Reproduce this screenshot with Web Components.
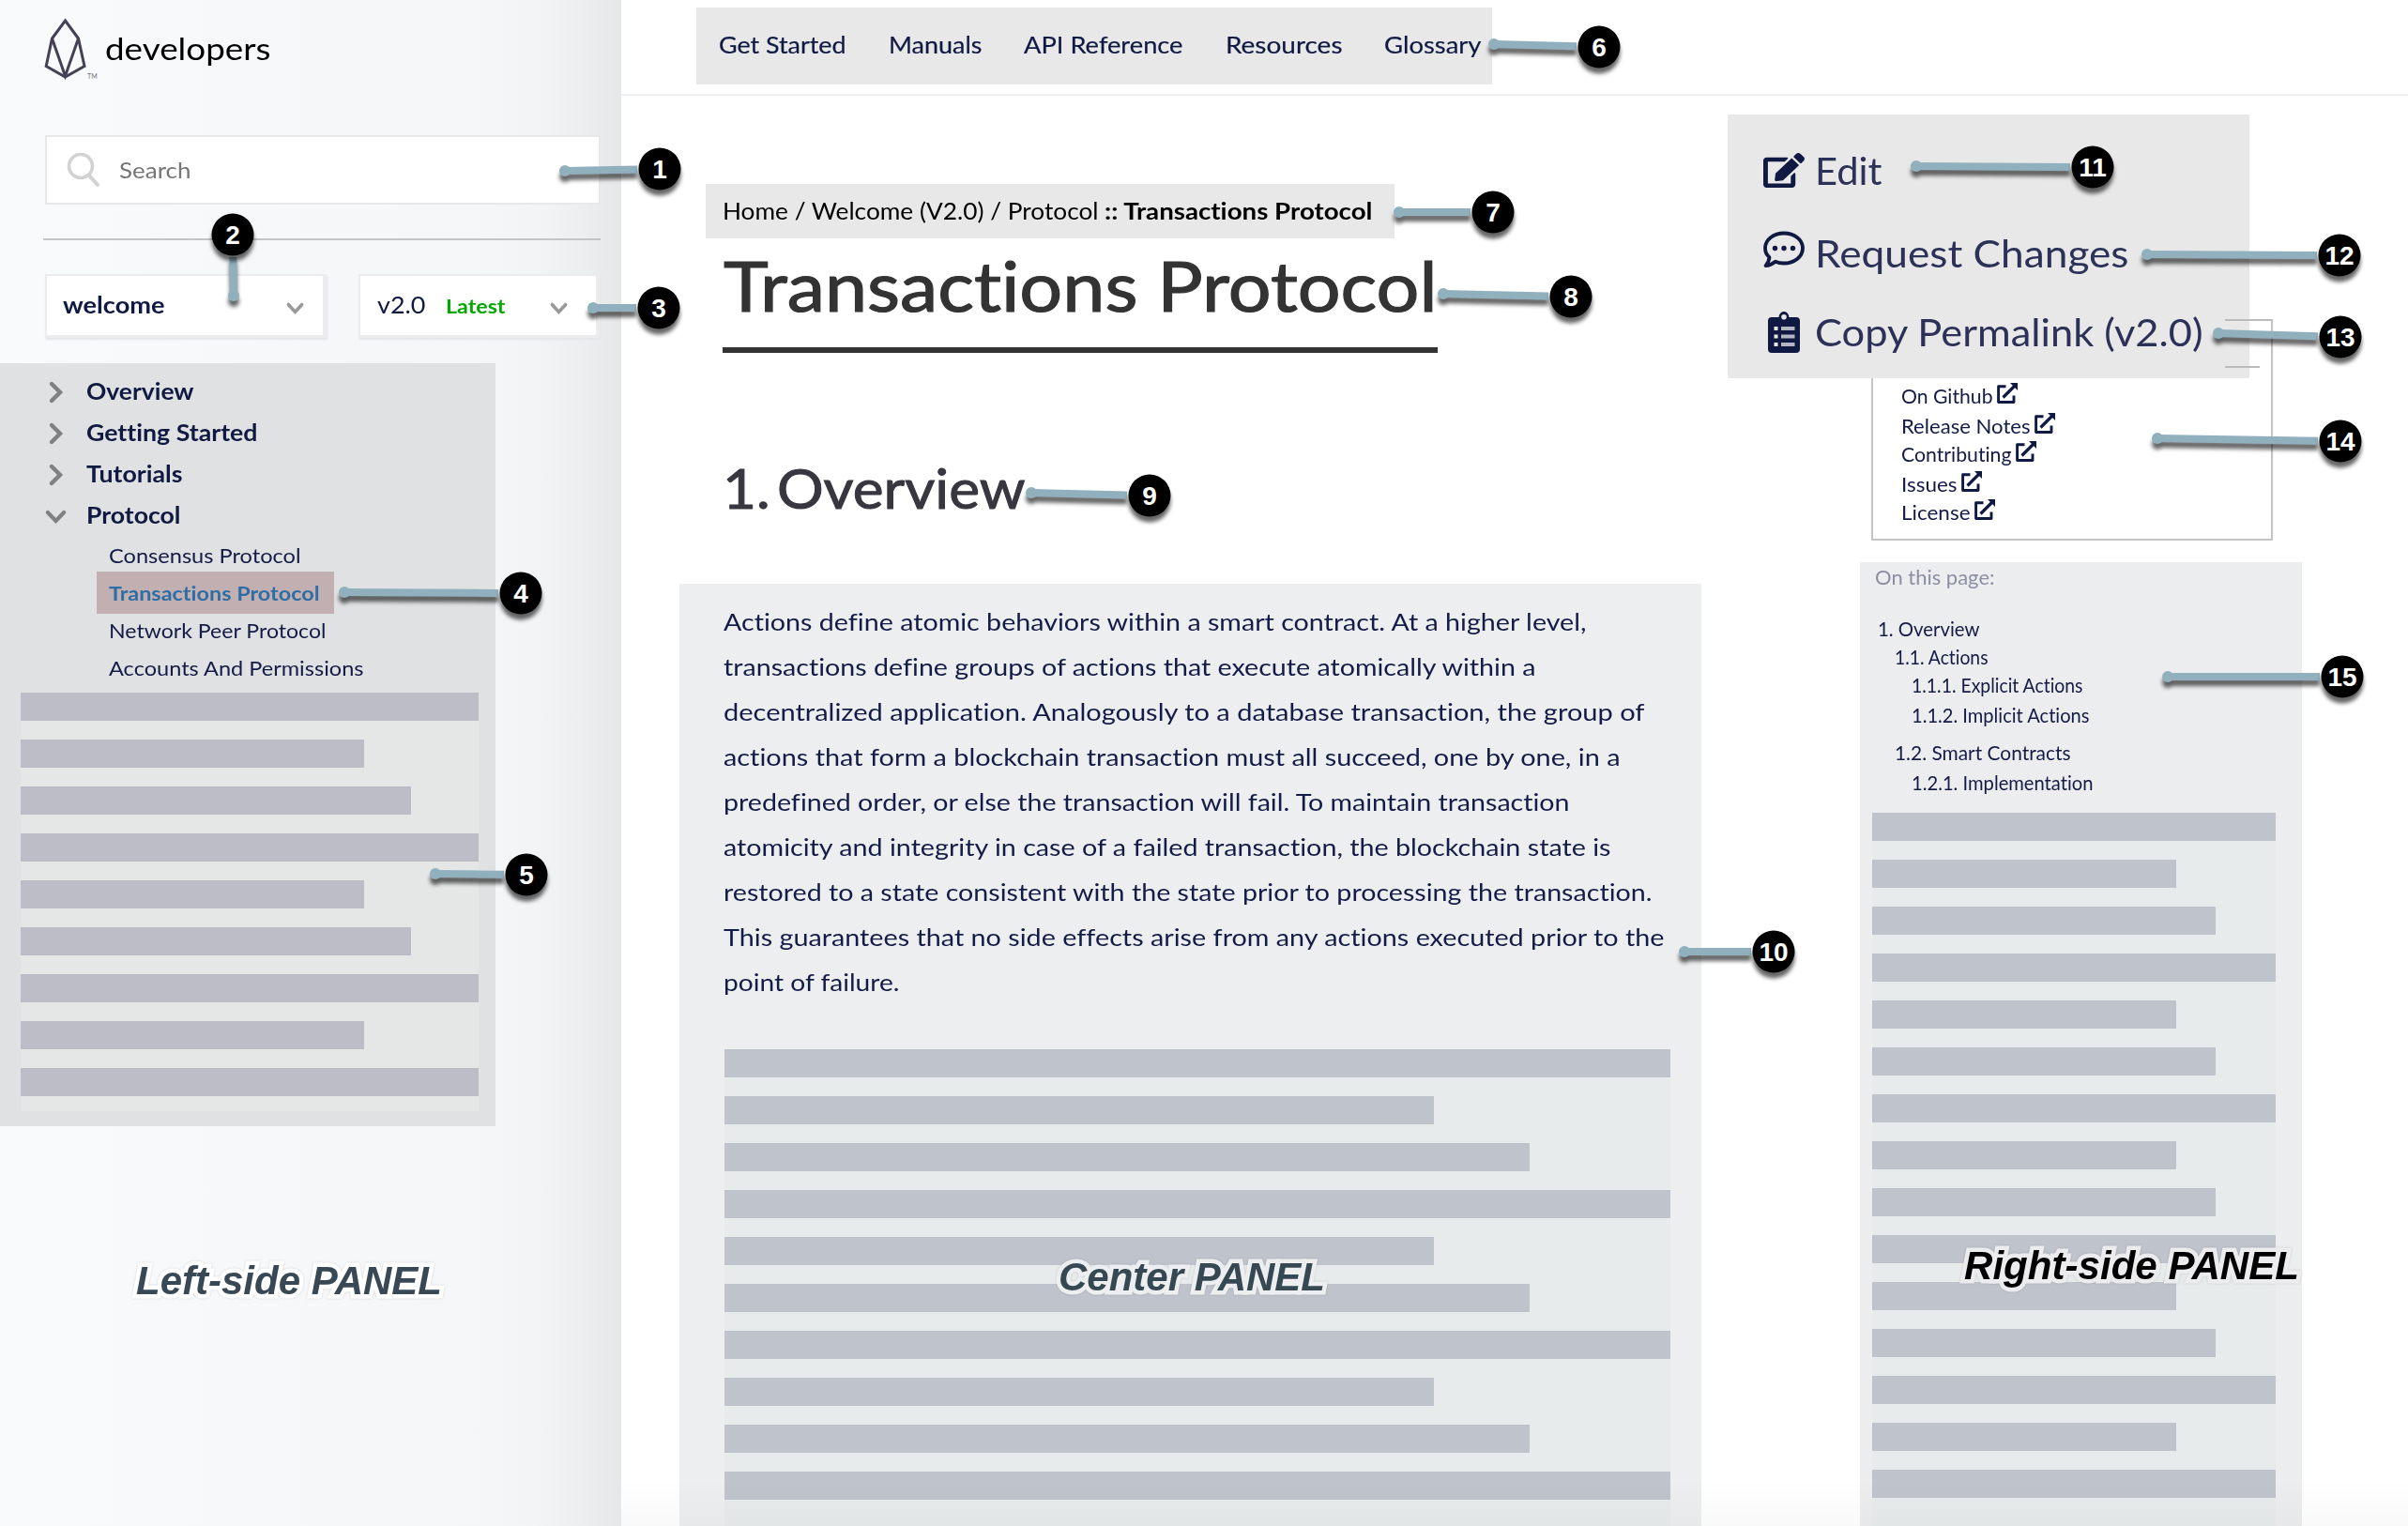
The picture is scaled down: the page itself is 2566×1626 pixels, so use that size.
<!DOCTYPE html>
<html lang="en">
<head>
<meta charset="utf-8">
<title>Transactions Protocol</title>
<style>
html,body{margin:0;padding:0;width:2566px;height:1626px;overflow:hidden;background:#fff;font-family:Lato,"Open Sans",sans-serif;font-variant-ligatures:none;color:#141b46}
</style>
</head>
<body>
<docs-page></docs-page>
<script>
const define = (name, html, setup) => {
  const tpl = document.createElement('template');
  tpl.innerHTML = html;
  customElements.define(name, class extends HTMLElement {
    constructor() { super(); this.attachShadow({ mode: 'open' }).append(tpl.content.cloneNode(true)); }
    connectedCallback() { if (setup && !this.ready) { this.ready = true; setup(this, this.shadowRoot); } }
  });
};

/* One line of text, widened so that it fills the width "w" */
define('fit-text', `<style>:host{display:block;white-space:nowrap;flex:none}span{display:inline-block;white-space:pre;transform-origin:0 50%}</style><span><slot></slot></span>`, (el, root) => {
  const w = +el.getAttribute('w');
  const s = +el.getAttribute('s');
  const h = +el.getAttribute('h');
  if (s) el.style.fontSize = s + 'px';
  if (h) { el.style.height = h + 'px'; el.style.lineHeight = h + 'px'; }
  const span = root.querySelector('span');
  if (w) {
    el.style.width = w + 'px';
    const natural = span.getBoundingClientRect().width;
    span.style.transform = `scaleX(${((w + 1.5) / natural).toFixed(4)})`;
  }
});

const ICONS = {
  edit: ['0 0 576 512', '<path fill="currentColor" d="M402.6 83.2l90.2 90.2c3.8 3.8 3.8 10 0 13.8L274.4 405.6l-92.8 10.3c-12.4 1.4-22.9-9.1-21.5-21.5l10.3-92.8L388.8 83.2c3.8-3.8 10-3.8 13.8 0zm162-22.9l-48.8-48.8c-15.2-15.2-39.9-15.2-55.2 0l-35.4 35.4c-3.8 3.8-3.8 10 0 13.8l90.2 90.2c3.8 3.8 10 3.8 13.8 0l35.4-35.4c15.2-15.3 15.2-40 0-55.2zM384 346.2V448H64V128h229.8c3.2 0 6.2-1.3 8.5-3.5l40-40c7.6-7.6 2.2-20.5-8.5-20.5H48C21.5 64 0 85.5 0 112v352c0 26.5 21.5 48 48 48h352c26.5 0 48-21.5 48-48V306.2c0-10.7-12.9-16-20.5-8.5l-40 40c-2.2 2.3-3.5 5.3-3.5 8.5z"/>'],
  comment: ['0 0 44 40', '<path fill="none" stroke="currentColor" stroke-width="3.800" stroke-linejoin="round" d="M22 2.500C32.800 2.500 42 9.300 42 18.500S32.800 34.500 22 34.500C18.500 34.500 15.500 33.900 12.800 32.700C9.800 35.200 6.300 37 2.500 37.200C4.800 34.600 6.200 31.500 6.500 28.200C3.600 25.600 2 22.200 2 18.500C2 9.300 11.200 2.500 22 2.500Z"/><g fill="currentColor"><circle cx="12.500" cy="18.500" r="2.700"/><circle cx="22" cy="18.500" r="2.700"/><circle cx="31.500" cy="18.500" r="2.700"/></g>'],
  clipboard: ['0 0 34 44', '<path fill="currentColor" fill-rule="evenodd" d="M4 6H11.500C12 2.500 14 0 17 0S22 2.500 22.500 6H30Q34 6 34 10V40Q34 44 30 44H4Q0 44 0 40V10Q0 6 4 6ZM17 3A2.800 2.800 0 1 0 17 8.600A2.800 2.800 0 1 0 17 3Z"/><path fill="#e8e8e8" d="M6.500 16H10.500V20H6.500ZM6.500 24.500H10.500V28.500H6.500ZM6.500 33H10.500V37H6.500Z"/><path fill="#b4b6c4" d="M14 16H28.500V20H14ZM14 24.500H28.500V28.500H14ZM14 33H28.500V37H14Z"/>'],
  external: ['0 0 22 22', '<path fill="none" stroke="currentColor" stroke-width="2.900" stroke-linejoin="round" d="M9.500 3.800H1.600V20.500H18V13.500"/><path fill="none" stroke="currentColor" stroke-width="3.200" d="M6.500 15.500L19 3"/><path fill="currentColor" d="M14 0H22V8Z"/>'],
  right: ['0 0 15 24', '<path fill="none" stroke="currentColor" stroke-width="4.400" stroke-linecap="round" stroke-linejoin="miter" d="M3 3L12 12L3 21"/>'],
  down: ['0 0 24 15', '<path fill="none" stroke="currentColor" stroke-width="4.400" stroke-linecap="round" stroke-linejoin="miter" d="M3 3L12 12L21 3"/>'],
  search: ['0 0 36 38', '<circle cx="15" cy="15" r="12.500" fill="none" stroke="currentColor" stroke-width="3.600"/><path fill="none" stroke="currentColor" stroke-width="4" stroke-linecap="round" d="M24 25L33 35"/>'],
  logo: ['0 0 56 66', '<g fill="none" stroke="#454055" stroke-width="3" stroke-linejoin="miter"><path d="M21.500 3L35.500 22L42 51.500L21.500 63L1.200 51.500L7.500 22Z"/><path d="M7.500 22L21.500 62L35.500 22"/></g>']
};
define('ui-icon', `<style>:host{display:block;flex:none}svg{display:block;width:100%;height:100%;overflow:visible}</style><svg preserveAspectRatio="none"></svg>`, (el, root) => {
  const [box, body] = ICONS[el.getAttribute('name')];
  const svg = root.querySelector('svg');
  svg.setAttribute('viewBox', box);
  svg.innerHTML = body;
  const [w, h] = el.getAttribute('size').split(' ');
  el.style.width = w + 'px';
  el.style.height = h + 'px';
});

define('dev-logo', `<style>:host{display:flex;height:66px;padding:19px 0 0 48px}
sup{font-size:7px;line-height:8px;color:#77737f;width:10px;margin:58px 0 0 -11px;display:block}
fit-text{color:#000;margin:6px 0 0 9px}</style>
<ui-icon name="logo" size="56 66"></ui-icon><sup>TM</sup><fit-text w="175" s="33.500" h="53">developers</fit-text>`);

define('search-box', `<style>:host{display:flex;align-items:center;box-sizing:border-box;width:592px;height:74px;margin:59px 0 0 48px;border:2px solid #e8e8e8;background:#fff;padding-left:21px;color:#d2d2d2}
fit-text{color:#757575;margin-left:20px}</style>
<ui-icon name="search" size="36 38"></ui-icon><fit-text w="75" s="23.500" h="66">Search</fit-text>`);

define('select-box', `<style>:host{display:flex;box-sizing:border-box;height:68px;border:2px solid #ececee;border-right-width:4px;border-bottom-width:3px;background:#fff;box-shadow:1px 2px 2px #e4e5e8;padding-left:17px;padding-right:20px;color:#0f1941}
.sp{flex:1}ui-icon{color:#999;margin-top:28px}</style>
<slot></slot><div class="sp"></div><ui-icon name="down" size="19 13"></ui-icon>`);

define('nav-item', `<style>:host{display:flex;height:44px;color:#0f1941;font-weight:700}
.i{width:92px;display:flex;justify-content:center;color:#808080;flex:none;box-sizing:border-box;padding-left:27px}
.i ui-icon{margin-top:12px}</style><div class="i"></div><slot></slot>`, (el, root) => {
  const open = el.hasAttribute('open');
  const icon = document.createElement('ui-icon');
  icon.setAttribute('name', open ? 'down' : 'right');
  icon.setAttribute('size', open ? '23 15' : '15 24');
  if (open) icon.style.marginTop = '17px';
  root.querySelector('.i').append(icon);
});

define('skeleton-bars', `<style>:host{display:flex;flex-direction:column;gap:20px;background:var(--gap,#e8ebec)}div{height:30px;background:var(--bar,#bfc3cc);flex:none}</style>`, (el, root) => {
  const widths = el.getAttribute('widths').split(' ');
  const n = +el.getAttribute('count');
  for (let i = 0; i < n; i++) {
    const bar = document.createElement('div');
    bar.style.width = (i === n - 1 ? widths[0] : widths[i % 3]) + 'px';
    root.append(bar);
  }
});

define('side-panel', `<style>:host{display:flex;flex-direction:column;align-items:flex-start;width:662px;height:1626px;flex:none;background:linear-gradient(90deg,#f8fafb 0,#f5f6f8 520px,#f3f4f6 570px,#edeef0 620px,#e6e7e8 662px)}
hr{border:0;margin:36px 0 0 46px;width:594px;height:2px;background:#c4c4c4}
.sel{display:flex;gap:34px;margin:36px 0 0 48px}
.tree{box-sizing:border-box;width:528px;height:813px;margin-top:27px;padding-top:7px;background:#e0e1e2}
.subs{padding:2px 0 0 116px}
.on{box-sizing:border-box;width:253px;height:45px;margin:-3px 0 -2px -13px;padding-left:13px;background:#c1afb1;color:#2f6ea5;font-weight:700}
skeleton-bars{--gap:#e5e7e6;--bar:#bdbdc8;margin:6px 0 0 22px;width:488px;padding-bottom:16px}
</style>
<dev-logo></dev-logo><search-box></search-box><hr>
<div class="sel"><select-box style="width:300px"><fit-text w="107" s="25" h="60" style="font-weight:700">welcome</fit-text></select-box>
<select-box style="width:257px;padding-left:18px;padding-right:30px"><fit-text w="50" s="25.500" h="61">v2.0</fit-text><fit-text w="62" s="21.500" h="64" style="font-weight:700;color:#00a800;margin-left:23px">Latest</fit-text></select-box></div>
<div class="tree">
<nav-item><fit-text w="113" s="25" h="44">Overview</fit-text></nav-item>
<nav-item><fit-text w="181" s="25" h="44">Getting Started</fit-text></nav-item>
<nav-item><fit-text w="101" s="25" h="44">Tutorials</fit-text></nav-item>
<nav-item open><fit-text w="99" s="25" h="44">Protocol</fit-text></nav-item>
<div class="subs"><fit-text w="203" s="21.500" h="40">Consensus Protocol</fit-text>
<div class="on"><fit-text w="223" s="21.500" h="46">Transactions Protocol</fit-text></div>
<fit-text w="230" s="21.500" h="40">Network Peer Protocol</fit-text>
<fit-text w="270" s="21.500" h="40">Accounts And Permissions</fit-text></div>
<skeleton-bars widths="488 366 416" count="9"></skeleton-bars>
</div>`);

define('top-nav', `<style>:host{display:block;height:100px;border-bottom:2px solid #eee}
nav{display:flex;gap:46.500px;box-sizing:border-box;width:848px;height:82px;margin-left:80px;padding-left:24px;background:#e8e8e8;color:#0f1941;-webkit-text-stroke:.2px #0f1941}
.w{padding-top:8px}</style><div class="w"><nav>
<fit-text w="134" s="25" h="78">Get Started</fit-text><fit-text w="98" s="25" h="78">Manuals</fit-text><fit-text w="168" s="25" h="78">API Reference</fit-text><fit-text w="123" s="25" h="78">Resources</fit-text><fit-text w="102" s="25" h="78">Glossary</fit-text></nav></div>`);

define('doc-article', `<style>:host{display:block;width:1089px;margin-left:62px;flex:none}
.crumb{display:flex;box-sizing:border-box;width:734px;height:58px;margin:94px 0 0 28px;padding-left:18px;background:#e8e8e8;color:#000}
.crumb b{display:block;margin-left:8px}
.title{width:762px;margin:10px 0 0 46px;padding-bottom:26px;border-bottom:6px solid #333;color:#333;-webkit-text-stroke:1.200px #333}
.title fit-text{margin-left:1px}
.h2{margin:110px 0 -1px 46px;color:#38363f;-webkit-text-stroke:1px #38363f;word-spacing:-8px}
.body{height:1004px;box-sizing:border-box;margin-top:69px;padding:16px 0 0 47px;background:#eceef0}
skeleton-bars{width:1008px;margin:48px 0 0 1px;height:508px}</style>
<div class="crumb"><fit-text w="399" s="25" h="57">Home / Welcome (V2.0) / Protocol</fit-text><b><fit-text w="284" s="25" h="57">:: Transactions Protocol</fit-text></b></div>
<div class="title"><fit-text w="759" s="73.500" h="80">Transactions Protocol</fit-text></div>
<div class="h2"><fit-text w="321" s="57.500" h="68">1. Overview</fit-text></div>
<div class="body">
<fit-text w="918" s="25.500" h="48">Actions define atomic behaviors within a smart contract. At a higher level,</fit-text>
<fit-text w="864" s="25.500" h="48">transactions define groups of actions that execute atomically within a</fit-text>
<fit-text w="980" s="25.500" h="48">decentralized application. Analogously to a database transaction, the group of</fit-text>
<fit-text w="954" s="25.500" h="48">actions that form a blockchain transaction must all succeed, one by one, in a</fit-text>
<fit-text w="900" s="25.500" h="48">predefined order, or else the transaction will fail. To maintain transaction</fit-text>
<fit-text w="944" s="25.500" h="48">atomicity and integrity in case of a failed transaction, the blockchain state is</fit-text>
<fit-text w="988" s="25.500" h="48">restored to a state consistent with the state prior to processing the transaction.</fit-text>
<fit-text w="1001" s="25.500" h="48">This guarantees that no side effects arise from any actions executed prior to the</fit-text>
<fit-text w="186" s="25.500" h="48">point of failure.</fit-text>
<skeleton-bars widths="1008 756 858" count="10"></skeleton-bars></div>`);

define('page-actions', `<style>:host{display:block;position:relative;box-sizing:border-box;width:556px;height:281px;margin-top:20px;background:#e8e8e8;color:#2c3158;padding-top:32px}
.r{display:flex;height:88px}.r+.r{height:84px}
.i{width:93px;display:flex;justify-content:center;box-sizing:border-box;padding-left:27px;color:#0f1941;flex:none}
.edge{position:absolute;left:530px;top:218px;width:49px;height:63px;border-top:2px solid #bbb;border-right:2px solid #c4c4c4}
.edge i{display:block;width:37px;height:2px;margin-top:48px;background:#bbb}</style>
<div class="r"><div class="i"><ui-icon name="edit" size="44 37" style="margin-top:9px"></ui-icon></div><fit-text w="70" s="41" h="55">Edit</fit-text></div>
<div class="r"><div class="i"><ui-icon name="comment" size="44 40" style="margin-top:4px"></ui-icon></div><fit-text w="333" s="41" h="55">Request Changes</fit-text></div>
<div class="r"><div class="i"><ui-icon name="clipboard" size="34 44" style="margin-top:6px"></ui-icon></div><fit-text w="412" s="41" h="55">Copy Permalink (v2.0)</fit-text></div>
<div class="edge"><i></i></div>`);

define('repo-links', `<style>:host{display:block;box-sizing:border-box;width:428px;height:173px;margin-left:153px;padding:4px 0 0 30px;border:2px solid #c4c4c4;border-top:0}
div{display:flex;gap:6px;height:30px}div.t{height:32px}ui-icon{margin-top:1px;color:#0f1941}</style>
<div class="t"><fit-text w="96" s="20.500" h="31">On Github</fit-text><ui-icon name="external" size="22 22"></ui-icon></div>
<div><fit-text w="136" s="20.500" h="31">Release Notes</fit-text><ui-icon name="external" size="22 22"></ui-icon></div>
<div class="t"><fit-text w="116" s="20.500" h="31">Contributing</fit-text><ui-icon name="external" size="22 22"></ui-icon></div>
<div><fit-text w="58" s="20.500" h="31">Issues</fit-text><ui-icon name="external" size="22 22"></ui-icon></div>
<div><fit-text w="72" s="20.500" h="31">License</fit-text><ui-icon name="external" size="22 22"></ui-icon></div>`);

define('page-toc', `<style>:host{display:block;box-sizing:border-box;width:471px;height:1027px;margin:23px 0 0 141px;background:#ecedef}
.l1{margin:26px 0 0 19px}.l2{margin-left:37px}.l3{margin-left:55px}
skeleton-bars{width:430px;height:760px;margin:17px 0 0 13px}</style>
<fit-text w="126" s="20.500" h="30" style="padding-top:1px;margin:0 0 -1px 16px;color:#8b8fa3">On this page:</fit-text>
<fit-text class="l1" w="107" s="20.500" h="30">1. Overview</fit-text>
<fit-text class="l2" w="98" s="20.500" h="30">1.1. Actions</fit-text>
<fit-text class="l3" w="181" s="20.500" h="30">1.1.1. Explicit Actions</fit-text>
<fit-text class="l3" w="188" s="20.500" h="30" style="margin-top:2px">1.1.2. Implicit Actions</fit-text>
<fit-text class="l2" w="186" s="20.500" h="30" style="margin-top:10px">1.2. Smart Contracts</fit-text>
<fit-text class="l3" w="192" s="20.500" h="30" style="margin-top:2px">1.2.1. Implementation</fit-text>
<skeleton-bars widths="430 324 366" count="15"></skeleton-bars>`);

/* Numbered marker: disc at x,y and a leader line that ends in a dot at x2,y2 */
define('call-out', `<style>:host{position:absolute;display:block;width:0;height:0}svg{position:absolute;left:0;top:0;overflow:visible;width:1px;height:1px}
.a{filter:drop-shadow(0 6px 2px rgba(0,0,0,.6))}text{font:700 28px "Liberation Sans",Arial,sans-serif;fill:#fff;text-anchor:middle}</style>
<svg><g class="a"><line stroke="#90b0be" stroke-width="8"/><circle class="d" r="6" fill="#90b0be"/></g><g class="a"><circle r="22.500"/></g><text y="10"></text></svg>`, (el, root) => {
  const [x, y, x2, y2] = el.getAttribute('at').split(' ').map(Number);
  el.style.left = x + 'px';
  el.style.top = y + 'px';
  const dx = x2 - x, dy = y2 - y, len = Math.hypot(dx, dy);
  const line = root.querySelector('line'), dot = root.querySelector('.d');
  line.setAttribute('x1', dx / len * 24);
  line.setAttribute('y1', dy / len * 24 + .01);
  line.setAttribute('x2', dx + .01);
  line.setAttribute('y2', dy + .02);
  dot.setAttribute('cx', dx);
  dot.setAttribute('cy', dy);
  root.querySelector('text').textContent = el.getAttribute('n');
});

define('panel-label', `<style>:host{position:absolute;display:block;white-space:nowrap;font:italic 700 42px/48px "Liberation Sans",Arial,sans-serif;-webkit-text-stroke:9px var(--halo,#fff);paint-order:stroke fill;stroke-linejoin:round;filter:drop-shadow(0 0 1px rgba(0,0,0,.15))}span{display:inline-block;transform-origin:0 50%}</style><span><slot></slot></span>`, (el, root) => {
  const [x, y, w] = el.getAttribute('at').split(' ');
  el.style.left = x + 'px';
  el.style.top = y + 'px';
  const span = root.querySelector('span');
  span.style.transform = `scaleX(${w / span.getBoundingClientRect().width})`;
});

define('docs-page', `<style>:host{display:flex;position:relative;width:2566px;height:1626px;overflow:hidden}
main{flex:1}.cols{display:flex;align-items:flex-start;height:1524px}aside{margin-left:28px;flex:none}
.fade{position:absolute;left:662px;right:0;bottom:0;height:50px;background:linear-gradient(rgba(0,0,0,0),rgba(0,0,0,.025))}</style>
<side-panel></side-panel>
<main><top-nav></top-nav><div class="cols"><doc-article></doc-article><aside><page-actions></page-actions><repo-links></repo-links><page-toc></page-toc></aside></div></main>
<div class="fade"></div>
<panel-label at="145 1341 326" style="color:#384955">Left-side PANEL</panel-label>
<panel-label at="1128 1337 284" style="color:#364852;--halo:#eceef0">Center PANEL</panel-label>
<panel-label at="2093 1325 357" style="color:#000;--halo:#ececee">Right-side PANEL</panel-label>
<call-out n="1" at="703 180 602 182"></call-out>
<call-out n="2" at="248 250 249 315"></call-out>
<call-out n="3" at="702 328 632 328"></call-out>
<call-out n="4" at="555 632 367 631"></call-out>
<call-out n="5" at="561 932 464 931"></call-out>
<call-out n="6" at="1704 50 1592 47"></call-out>
<call-out n="7" at="1591 226 1491 226"></call-out>
<call-out n="8" at="1674 316 1538 313"></call-out>
<call-out n="9" at="1225 528 1099 525"></call-out>
<call-out n="10" at="1890 1014 1795 1014"></call-out>
<call-out n="11" at="2230 178 2042 177"></call-out>
<call-out n="12" at="2493 272 2288 271"></call-out>
<call-out n="13" at="2494 359 2364 355"></call-out>
<call-out n="14" at="2494 470 2299 467"></call-out>
<call-out n="15" at="2496 721 2310 721"></call-out>`);
</script>
</body>
</html>
